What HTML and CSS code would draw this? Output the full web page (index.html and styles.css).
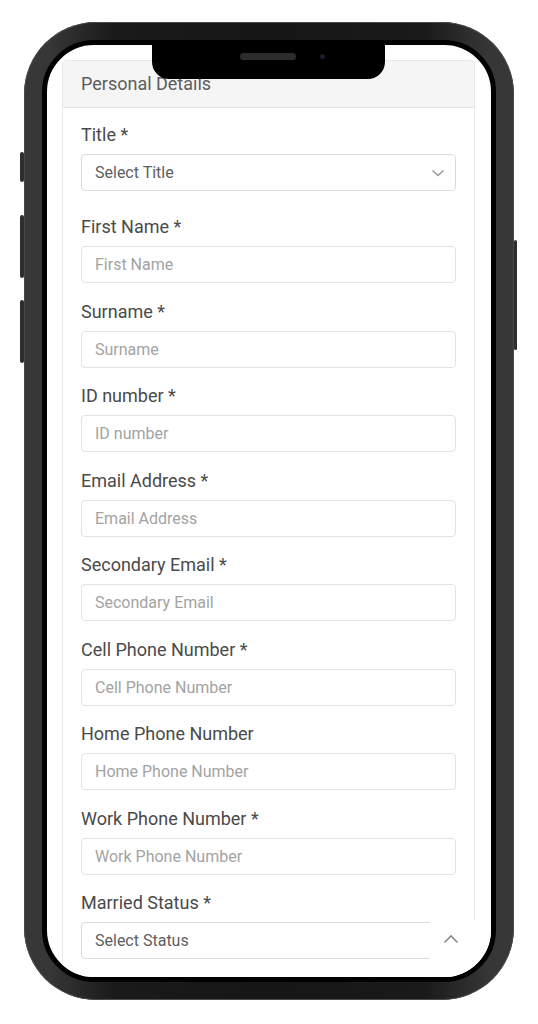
FILE: index.html
```html
<!DOCTYPE html>
<html>
<head>
<meta charset="utf-8">
<link rel="stylesheet" href="styles.css">
</head>
<body>
<div class="phone">
  <span class="btn btn-l1"></span>
  <span class="btn btn-l2"></span>
  <span class="btn btn-l3"></span>
  <span class="btn btn-r1"></span>
  <div class="screen">
    <div class="notch"><span class="speaker"></span><span class="camera"></span></div>
    <div class="card">
      <div class="card-header">Personal Details</div>
      <div class="card-body">
        <div class="field field-select">
          <label class="label">Title *</label>
          <div class="control select">Select Title
            <svg class="chev" width="14" height="8" viewBox="0 0 14 8"><path d="M1.5 1.5 L7 6.5 L12.5 1.5" fill="none" stroke="#9a9a9a" stroke-width="1.6"/></svg>
          </div>
        </div>
        <div class="field"><label class="label">First Name *</label><div class="control">First Name</div></div>
        <div class="field"><label class="label">Surname *</label><div class="control">Surname</div></div>
        <div class="field"><label class="label">ID number *</label><div class="control">ID number</div></div>
        <div class="field"><label class="label">Email Address *</label><div class="control">Email Address</div></div>
        <div class="field"><label class="label">Secondary Email *</label><div class="control">Secondary Email</div></div>
        <div class="field"><label class="label">Cell Phone Number *</label><div class="control">Cell Phone Number</div></div>
        <div class="field"><label class="label">Home Phone Number</label><div class="control">Home Phone Number</div></div>
        <div class="field"><label class="label">Work Phone Number *</label><div class="control">Work Phone Number</div></div>
        <div class="field"><label class="label">Married Status *</label><div class="control select">Select Status</div></div>
      </div>
    </div>
    <div class="mask"></div>
    <svg class="chev-up" width="16" height="10" viewBox="0 0 16 10"><path d="M1.5 8.5 L8 2 L14.5 8.5" fill="none" stroke="#8a8a8a" stroke-width="1.6"/></svg>
  </div>
</div>
</body>
</html>
```
FILE: styles.css
```css
html, body {
  margin: 0;
  padding: 0;
  background: #ffffff;
}
body {
  font-family: Roboto, "Liberation Sans", Arial, sans-serif;
  width: 538px;
  height: 1024px;
  overflow: hidden;
}
.phone {
  position: relative;
  margin: 22px 0 0 24px;
  width: 490px;
  height: 978px;
  box-sizing: border-box;
  padding: 18px;
  border-radius: 72px;
  background: linear-gradient(to right, #383838 0, #363636 26px, #1a1a1a 90px, #161616 50%, #1a1a1a calc(100% - 90px), #363636 calc(100% - 26px), #383838 100%);
  box-shadow: inset 0 0 0 1px #4a4a4a;
}
.btn {
  position: absolute;
  background: #2e2e2e;
  border-radius: 2px;
}
.btn-l1 { left: -4px; top: 130px; width: 4px; height: 30px; }
.btn-l2 { left: -4px; top: 193px; width: 4px; height: 63px; }
.btn-l3 { left: -4px; top: 278px; width: 4px; height: 63px; }
.btn-r1 { right: -3px; top: 218px; width: 3px; height: 110px; }
.screen {
  position: relative;
  height: 100%;
  box-sizing: border-box;
  border: 5px solid #000;
  border-radius: 52px;
  background: #fff;
  overflow: hidden;
  padding: 15px 16px 0 15px;
}
.notch {
  position: absolute;
  left: 105px;
  top: 0;
  width: 233px;
  height: 34px;
  background: #000;
  border-radius: 0 0 17px 17px;
  z-index: 3;
}
.speaker {
  position: absolute;
  left: 88px;
  top: 8px;
  width: 56px;
  height: 7px;
  border-radius: 4px;
  background: #2c2c2c;
}
.camera {
  position: absolute;
  left: 168px;
  top: 9px;
  width: 5px;
  height: 5px;
  border-radius: 50%;
  background: #1c1c2a;
}
.card {
  border: 1px solid #e8e8e8;
  border-radius: 4px;
  background: #fff;
}
.card-header {
  height: 46px;
  line-height: 46px;
  padding-left: 18px;
  background: #f5f5f5;
  border-bottom: 1px solid #e3e3e3;
  color: #5c5c5c;
  font-size: 18px;
}
.card-body {
  padding: 17px 18px 0 18px;
}
.field {
  margin-bottom: 18.5px;
}
.field-select {
  margin-bottom: 26px;
}
.label {
  display: block;
  height: 20px;
  line-height: 20px;
  font-size: 18px;
  color: #4a4a4a;
  margin-bottom: 9px;
}
.control {
  position: relative;
  height: 37px;
  line-height: 35px;
  box-sizing: border-box;
  border: 1px solid #e2e2e2;
  border-radius: 4px;
  padding-left: 13px;
  font-size: 16px;
  color: #a3a3a3;
}
.select {
  color: #5e5e5e;
  border-color: #dcdcdc;
}
.chev {
  position: absolute;
  right: 10px;
  top: 14px;
}
.mask {
  position: absolute;
  left: 383px;
  top: 875px;
  right: 0;
  bottom: 0;
  background: #fff;
  z-index: 1;
}
.chev-up {
  position: absolute;
  left: 396px;
  top: 889px;
  z-index: 2;
}
```
